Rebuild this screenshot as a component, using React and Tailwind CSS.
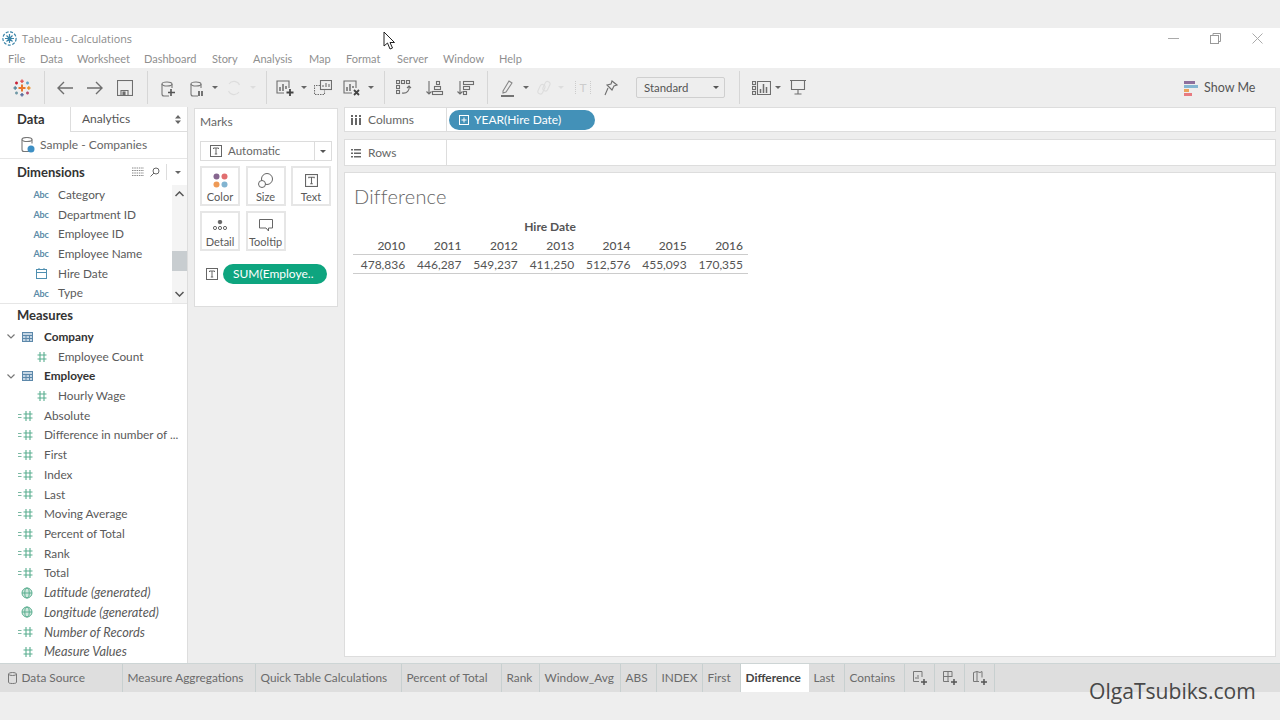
import React from "react";

const Sep = () => <div className="w-px h-[33px] bg-[#d6d6d6] shrink-0" />;
const Caret = ({ c = "#666" }) => (
  <svg width="6" height="3" viewBox="0 0 6 3"><path d="M0 0h6L3 3z" fill={c} /></svg>
);
const Slot = ({ w, children }) => (
  <div className="flex items-center justify-center shrink-0 h-full" style={{ width: w }}>{children}</div>
);
const S = ({ children, w = 20, h = 20 }) => (
  <svg width={w} height={h} viewBox={`0 0 ${w} ${h}`} fill="none" stroke="#6e6e6e" strokeWidth="1.100">{children}</svg>
);
const Logo = () => (
  <svg width="18" height="18" viewBox="0 0 18 18" strokeWidth="1.500" fill="none">
    <path d="M9 5.500v7M5.500 9h7" stroke="#e8762c" strokeWidth="2" />
    <path d="M9 0.500v3.500M7.300 2.200h3.400" stroke="#e15759" />
    <path d="M9 14v3.500M7.300 15.800h3.400" stroke="#5b6e9f" />
    <path d="M0.500 9h3.500M2.200 7.300v3.400" stroke="#59879b" />
    <path d="M14 9h3.500M15.800 7.300v3.400" stroke="#eb9129" />
    <path d="M3.500 2.500v3M2 4h3" stroke="#c72035" />
    <path d="M14.500 2.500v3M13 4h3" stroke="#5fa2c7" />
    <path d="M3.500 12.500v3M2 14h3" stroke="#7099a6" />
    <path d="M14.500 12.500v3M13 14h3" stroke="#b84d6d" />
  </svg>
);
const Cylinder = ({ x = 3, y = 3, stroke = "#777" }) => (
  <g stroke={stroke} fill="none" strokeWidth="1.100">
    <ellipse cx={x + 5} cy={y + 2} rx="5" ry="2" />
    <path d={`M${x} ${y + 2}v10a2 2 0 0 0 2 2h5M${x + 10} ${y + 2}v4`} />
  </g>
);
const Hash = ({ calc }) => (
  <svg width="18" height="12" viewBox="0 0 18 12" fill="none" stroke="#5aae90" strokeWidth="1.100">
    {calc && <path d="M0 4.500h3.500M0 7.500h3.500" stroke="#7ab8a2" />}
    <path d="M8 1v10M12 1v10M5.500 4h9M5.500 8h9" />
  </svg>
);
const Globe = () => (
  <svg width="12" height="12" viewBox="0 0 12 12" fill="#cfe8dd" stroke="#5aae90" strokeWidth="1">
    <circle cx="6" cy="6" r="5" />
    <ellipse cx="6" cy="6" rx="2.200" ry="5" fill="none" />
    <path d="M1 6h10" />
  </svg>
);
const Cal = () => (
  <svg width="11" height="11" viewBox="0 0 11 11" fill="none" stroke="#4f8fb0" strokeWidth="1">
    <rect x="0.500" y="1.500" width="10" height="9" />
    <path d="M0.500 4.500h10M3 0v2M8 0v2" />
  </svg>
);
const Abc = () => <span className="text-[9px] font-bold text-[#5c8ba8] tracking-tight leading-none">Abc</span>;
const TableIco = () => (
  <svg width="11" height="10" viewBox="0 0 11 10" fill="#c5d6e4" stroke="#5c88aa" strokeWidth="1">
    <rect x="0.500" y="0.500" width="10" height="9" />
    <path d="M0.500 3.500h10M4 3.500v6M7.500 3.500v6M0.500 6.500h10" />
  </svg>
);
const Chev = () => (
  <svg width="8" height="5" viewBox="0 0 8 5" fill="none" stroke="#777" strokeWidth="1.200"><path d="M0.500 0.500L4 4l3.500-3.500" /></svg>
);
const TBox = ({ size = 12 }) => (
  <svg width={size} height={size} viewBox="0 0 12 12" fill="none" stroke="#666" strokeWidth="1">
    <rect x="0.500" y="0.500" width="11" height="11" />
    <path d="M3.500 4V3h5v1M6 3v6M4.800 9h2.400" />
  </svg>
);

const Row = ({ pad, icon, label, italic }) => (
  <div className="flex items-center h-[19.7px] shrink-0 whitespace-nowrap text-[#5a5a5a]">
    <div className="flex justify-center items-center shrink-0 w-[18px]" style={{ marginLeft: pad }}>{icon}</div>
    <span className={italic ? "ml-[8px] italic text-[12.8px]" : "ml-[8px] text-[11.8px]"}>{label}</span>
  </div>
);
const dims = [
  ["Category", <Abc />], ["Department ID", <Abc />], ["Employee ID", <Abc />],
  ["Employee Name", <Abc />], ["Hire Date", <Cal />], ["Type", <Abc />],
];
const calc = ["Absolute", "Difference in number of ...", "First", "Index", "Last", "Moving Average", "Percent of Total", "Rank", "Total"];
const menu = [["File", 32], ["Data", 37], ["Worksheet", 67], ["Dashboard", 68], ["Story", 41], ["Analysis", 56], ["Map", 37], ["Format", 51], ["Server", 46], ["Window", 56], ["Help", 40]];
const MenuBar = () => (
  <div className="h-[19px] bg-white flex items-center pl-2 pt-[2px] text-[11px] text-[#8f8f8f] shrink-0">
    {menu.map(([m, w]) => <span key={m} className="shrink-0" style={{ width: w }}>{m}</span>)}
  </div>
);
const Card = ({ icon, label }) => (
  <div className="w-[40px] h-[40px] border-2 border-[#e6e6e6] flex flex-col items-center justify-between pt-[3px] text-[11px] text-[#5a5a5a] shrink-0">
    <div className="h-[18px] flex items-center justify-center">{icon}</div>
    <span className="leading-[14px] whitespace-nowrap">{label}</span>
  </div>
);
const Shelf = ({ icon, label, children, h }) => (
  <div className={`flex bg-white border border-[#dddddd] shrink-0 ${h}`}>
    <div className="w-[102px] border-r border-[#dddddd] flex items-center pl-[6px] gap-[7px] text-[12px] text-[#666]">
      {icon}<span className="pt-[1px]">{label}</span>
    </div>
    <div className="flex-1 flex items-center pl-[2px]">{children}</div>
  </div>
);
const years = [["2010", "478,836"], ["2011", "446,287"], ["2012", "549,237"], ["2013", "411,250"], ["2014", "512,576"], ["2015", "455,093"], ["2016", "170,355"]];
const Tab = ({ w, children, active, center }) => (
  <div className={`h-full shrink-0 flex items-center text-[11.85px] whitespace-nowrap ${center ? "justify-center" : "pl-[4.5px]"} ${active ? "bg-white font-bold text-[#444]" : "border-r border-[#c8d0d0] text-[#6b6b6b]"}`} style={{ width: w }}>
    {children}
  </div>
);
const NewTab = ({ children }) => (
  <Tab w={30} center>
    <svg width="16" height="16" viewBox="0 0 16 16" fill="none" stroke="#777" strokeWidth="1">
      {children}
      <path d="M12 9v6M9 12h6" stroke="#555" strokeWidth="1.500" />
    </svg>
  </Tab>
);

export default function App() {
  return (
    <div className="relative w-[1280px] h-[720px] overflow-hidden flex flex-col bg-[#eeeeee] font-['Lato',sans-serif]">
      <div className="h-[28px] shrink-0" />
      <div className="h-[21px] bg-white flex items-center shrink-0 pl-[2px] gap-[5px] pr-[17px]">
        <svg width="15" height="15" viewBox="0 0 15 15" fill="none" stroke="#3a84a8" strokeWidth="1.200">
          <circle cx="7.500" cy="7.500" r="6.600" strokeDasharray="3 1.500" />
          <path d="M7.500 3v9M3 7.500h9M4.500 4.500l6 6M10.500 4.500l-6 6" />
        </svg>
        <span className="pt-[1px] text-[10.8px] text-[#8a8a8a] font-['Open_Sans',sans-serif] flex-1">Tableau - Calculations</span>
        <div className="flex items-center gap-[31px]">
          <svg width="11" height="11" viewBox="0 0 11 11" stroke="#aaa"><path d="M0 5.500h11" /></svg>
          <svg width="11" height="11" viewBox="0 0 11 11" fill="none" stroke="#999"><rect x="0.500" y="2.500" width="8" height="8" /><path d="M3 2.500v-2h7.500v8h-2" /></svg>
          <svg width="11" height="11" viewBox="0 0 11 11" stroke="#aaa"><path d="M0.500 0.500l10 10M10.500 0.500l-10 10" /></svg>
        </div>
      </div>
      <MenuBar />

      <div className="h-[39px] flex items-center shrink-0 text-[#555]">
        <Slot w={44}><Logo /></Slot>
        <Sep />
        <Slot w={5} />
        <Slot w={30}><S w={18} h={14}><path d="M17 7H2M8 1L2 7l6 6" strokeWidth="1.400" /></S></Slot>
        <Slot w={30}><S w={18} h={14}><path d="M1 7h15M10 1l6 6-6 6" strokeWidth="1.400" /></S></Slot>
        <Slot w={30}><S w={16} h={16}><rect x="0.500" y="0.500" width="15" height="15" /><path d="M4 15.500v-5h7v5" /><rect x="6" y="12" width="2" height="3" fill="#666" /></S></Slot>
        <Slot w={7} />
        <Sep />
        <Slot w={5} />
        <Slot w={30}><S w={18} h={18}><Cylinder /><path d="M12 10v7M9 13.500h7" strokeWidth="1.600" stroke="#555" /></S></Slot>
        <Slot w={28}><S w={18} h={18}><Cylinder /><path d="M11 12v5M14 12v5" strokeWidth="1.600" stroke="#555" /></S></Slot>
        <Slot w={8}><Caret /></Slot>
        <Slot w={30}><S w={16} h={16}><g stroke="#ddd"><path d="M13.500 5A6 6 0 0 0 3 4M2.500 11A6 6 0 0 0 13 12" /></g></S></Slot>
        <Slot w={8}><Caret c="#ddd" /></Slot>
        <Slot w={9} />
        <Sep />
        <Slot w={3} />
        <Slot w={30}><S w={20} h={18}><path d="M14 9V2H2v12h7" /><path d="M5 12V8M8 12V5M11 10V7" strokeWidth="1.500" /><path d="M15 10v7M11.500 13.500h7" stroke="#444" strokeWidth="1.800" /></S></Slot>
        <Slot w={8}><Caret /></Slot>
        <Slot w={30}><S w={18} h={16}><rect x="6.500" y="0.500" width="11" height="9" /><path d="M9 7V5M12 7V3M15 7V4" /><path d="M6 5.500H0.500v9h10v-4" strokeDasharray="1.500 1" /></S></Slot>
        <Slot w={28}><S w={20} h={18}><path d="M14 9V2H2v12h8" /><path d="M5 12V8M8 12V5M11 9V7" strokeWidth="1.500" /><path d="M12 11l5 5M17 11l-5 5" stroke="#444" strokeWidth="1.800" /></S></Slot>
        <Slot w={10}><Caret /></Slot>
        <Slot w={8} />
        <Sep />
        <Slot w={4} />
        <Slot w={30}><S w={16} h={16}><rect x="0.500" y="0.500" width="3" height="3" /><rect x="5.500" y="0.500" width="3" height="3" /><rect x="10.500" y="0.500" width="3" height="3" /><rect x="0.500" y="5.500" width="3" height="3" /><rect x="0.500" y="10.500" width="3" height="3" /><path d="M6 13c5 1 8-3 7-7M11 8l2-2 2 2" /></S></Slot>
        <Slot w={32}><S w={18} h={16}><path d="M3 1v13M0.500 11.500L3 14l2.500-2.500" /><rect x="10.500" y="1.500" width="3" height="3" /><rect x="8.500" y="6.500" width="6" height="3" /><rect x="6.500" y="11.500" width="10" height="3" /></S></Slot>
        <Slot w={29}><S w={18} h={16}><path d="M3 1v13M0.500 11.500L3 14l2.500-2.500" /><rect x="6.500" y="1.500" width="10" height="3" /><rect x="6.500" y="6.500" width="6" height="3" /><rect x="6.500" y="11.500" width="3" height="3" /></S></Slot>
        <Slot w={7} />
        <Sep />
        <Slot w={6} />
        <Slot w={28}><S w={14} h={18}><path d="M2 12L8 2l3 2-6 9-3 1z" stroke="#888" /><path d="M0 17h13" strokeWidth="1.600" stroke="#555" /></S></Slot>
        <Slot w={8}><Caret /></Slot>
        <Slot w={27}><S w={14} h={16}><g stroke="#ddd"><rect x="2" y="4" width="5" height="10" rx="2.500" transform="rotate(25 4 9)" /><rect x="7" y="1" width="5" height="10" rx="2.500" transform="rotate(25 9 6)" /></g></S></Slot>
        <Slot w={8}><Caret c="#ddd" /></Slot>
        <Slot w={36}><span className="text-[12px] text-[#ccc] border-x border-dotted border-[#ccc] px-[3px] leading-[13px]">T</span></Slot>
        <Slot w={20}><S w={14} h={16}><path d="M8 1l5 4-3 1-2 4-5-5 4-1zM4 8l-3 7" /></S></Slot>
        <Slot w={15} />
        <div className="w-[89px] h-[21px] border border-[#cfcfcf] rounded-[2px] flex items-center justify-between pl-[7px] pr-[5px] text-[11.4px] text-[#555] shrink-0">
          <span>Standard</span><Caret c="#555" />
        </div>
        <Slot w={14} />
        <Sep />
        <Slot w={11} />
        <Slot w={20}><S w={19} h={14}><rect x="0.500" y="0.500" width="3" height="3" /><rect x="0.500" y="5.500" width="3" height="3" /><rect x="0.500" y="10.500" width="3" height="3" /><path d="M5.500 0.500h13v13h-13z" /><path d="M8.500 12V8M11.500 12V3M14.500 12V6" strokeWidth="1.500" /></S></Slot>
        <Slot w={3} />
        <Slot w={8}><Caret /></Slot>
        <Slot w={8} />
        <Slot w={16}><S w={16} h={15}><path d="M0 0.500h16M1.500 0.500v9h13v-9M8 9.500v4M4.500 14h7" /></S></Slot>
        <div className="ml-[378px] flex items-center gap-[5px] mt-[1px]">
          <svg width="15" height="15" viewBox="0 0 15 15">
            <rect y="0" width="11" height="3" fill="#8e6f9c" />
            <rect y="4" width="14" height="3" fill="#84b6d2" />
            <rect y="8" width="5" height="3" fill="#eba25a" />
            <rect y="12" width="8" height="3" fill="#e87a80" />
          </svg>
          <span className="text-[12.5px] text-[#555]">Show Me</span>
        </div>
      </div>

      <div className="flex-1 flex min-h-0">
        <div className="w-[188px] shrink-0 bg-white border-r border-[#dddddd] flex flex-col overflow-hidden">
          <div className="h-[25px] flex shrink-0">
            <div className="w-[70px] flex items-center pl-[17px] text-[13px] font-bold text-[#333]">Data</div>
            <div className="flex-1 bg-white border-l border-b border-[#dddddd] flex items-center justify-between pl-[11px] pr-[6px] text-[12px] text-[#555]">
              <span>Analytics</span>
              <svg width="6" height="9" viewBox="0 0 6 9" fill="#666"><path d="M3 0l3 3.500H0zM3 9L0 5.500h6z" /></svg>
            </div>
          </div>
          <div className="h-[27px] shrink-0 border-b border-[#e6e6e6] flex items-center pl-[21px] gap-[5px] text-[12px] text-[#666]">
            <svg width="14" height="16" viewBox="0 0 14 16"><Cylinder x={1} y={0.5} /><circle cx="10" cy="12" r="3.500" fill="#3d8fc4" /></svg>
            <span>Sample - Companies</span>
          </div>
          <div className="h-[26px] shrink-0 flex items-center pl-[17px] pr-[6px] text-[13px] font-bold text-[#333]">
            <span className="flex-1 pt-[2px]">Dimensions</span>
            <svg width="12" height="10" viewBox="0 0 12 10" stroke="#888" strokeDasharray="1.500 0.800"><path d="M0 1h12M0 3.500h12M0 6h12M0 8.500h12" /></svg>
            <svg className="ml-[6px]" width="10" height="10" viewBox="0 0 10 10" fill="none" stroke="#666"><circle cx="6" cy="4" r="3" /><path d="M4 6L0.500 9.500" /></svg>
            <div className="w-px h-[16px] bg-[#ddd] ml-[6px] mr-[8px]" />
            <Caret />
          </div>
          <div className="h-[119px] shrink-0 border-b border-[#e6e6e6] flex">
            <div className="flex-1 flex flex-col">
              {dims.map(([l, i]) => <Row key={l} pad={32} icon={i} label={l} />)}
            </div>
            <div className="w-[15px] bg-[#f4f4f4] flex flex-col items-center pt-[6px] pb-[6px]">
              <svg className="shrink-0" width="9" height="6" viewBox="0 0 9 6" fill="none" stroke="#555" strokeWidth="1.500"><path d="M0.500 5L4.500 1l4 4" /></svg>
              <div className="w-full h-[20px] bg-[#c8cdd0] mt-[54px] shrink-0" />
              <svg className="mt-auto shrink-0" width="9" height="6" viewBox="0 0 9 6" fill="none" stroke="#555" strokeWidth="1.500"><path d="M0.500 1l4 4 4-4" /></svg>
            </div>
          </div>
          <div className="h-[23px] shrink-0 flex items-center pl-[17px] text-[13px] font-bold text-[#333]">Measures</div>
          <div className="flex flex-col">
            <FolderRow label="Company" />
            <Row pad={32} icon={<Hash />} label="Employee Count" />
            <FolderRow label="Employee" />
            <Row pad={32} icon={<Hash />} label="Hourly Wage" />
            {calc.map((l) => <Row key={l} pad={18} icon={<Hash calc />} label={l} />)}
            <Row pad={18} icon={<Globe />} italic label="Latitude (generated)" />
            <Row pad={18} icon={<Globe />} italic label="Longitude (generated)" />
            <Row pad={18} icon={<Hash calc />} italic label="Number of Records" />
            <Row pad={18} icon={<Hash />} italic label="Measure Values" />
          </div>
        </div>

        <div className="w-[144px] h-[199px] ml-[6px] mt-[1px] shrink-0 bg-white border border-[#dddddd] px-[5px] flex flex-col">
          <div className="h-[25px] flex items-center text-[12px] text-[#666] shrink-0">Marks</div>
          <div className="mt-[7px] h-[20px] border border-[#dcdcdc] flex items-center text-[11.5px] text-[#666] shrink-0">
            <div className="flex-1 flex items-center pl-[9px] gap-[6px]"><TBox />Automatic</div>
            <div className="w-[17px] h-full border-l border-[#dcdcdc] flex items-center justify-center"><Caret c="#555" /></div>
          </div>
          <div className="mt-[5px] flex gap-[5.5px] shrink-0">
            <Card label="Color" icon={
              <svg width="15" height="15" viewBox="0 0 15 15"><circle cx="3.500" cy="3.500" r="3" fill="#86668f" /><circle cx="11.500" cy="3.500" r="3" fill="#e16e70" /><circle cx="3.500" cy="11.500" r="3" fill="#ee9a56" /><circle cx="11.500" cy="11.500" r="3" fill="#82b4d1" /></svg>
            } />
            <Card label="Size" icon={
              <svg width="15" height="15" viewBox="0 0 15 15" fill="none" stroke="#666"><circle cx="9" cy="6" r="5.500" /><circle cx="4" cy="11" r="3.500" fill="#fff" /></svg>
            } />
            <Card label="Text" icon={<TBox size={13} />} />
          </div>
          <div className="mt-[5px] flex gap-[5.5px] shrink-0">
            <Card label="Detail" icon={
              <svg width="14" height="10" viewBox="0 0 14 10" fill="none" stroke="#666"><circle cx="7" cy="2" r="1.800" fill="#666" /><circle cx="2" cy="8" r="1.600" /><circle cx="7" cy="8" r="1.600" /><circle cx="12" cy="8" r="1.600" /></svg>
            } />
            <Card label="Tooltip" icon={
              <svg width="14" height="13" viewBox="0 0 14 13" fill="none" stroke="#666"><path d="M0.500 0.500h13v8.500H9.500v3L7 9H0.500z" /></svg>
            } />
          </div>
          <div className="mt-[13px] flex items-center shrink-0">
            <div className="w-[23px] flex justify-center"><TBox /></div>
            <div className="w-[104px] h-[20px] rounded-full bg-[#0ea57f] text-white text-[12px] flex items-center pl-[10px] whitespace-nowrap">SUM(Employe..</div>
          </div>
        </div>

        <div className="ml-[6px] w-[932px] shrink-0 flex flex-col pb-[6px]">
          <Shelf h="h-[25px]" label="Columns" icon={
            <svg width="10" height="10" viewBox="0 0 10 10" fill="#666"><rect width="2" height="2" /><rect x="4" width="2" height="2" /><rect x="8" width="2" height="2" /><rect y="3" width="2" height="7" /><rect x="4" y="3" width="2" height="7" /><rect x="8" y="3" width="2" height="7" /></svg>
          }>
            <div className="w-[146px] h-[20px] rounded-full bg-[#4391b8] text-white text-[12px] flex items-center pl-[10px] gap-[5px]">
              <svg width="10" height="10" viewBox="0 0 10 10" fill="none" stroke="#fff"><rect x="0.500" y="0.500" width="9" height="9" /><path d="M5 2.500v5M2.500 5h5" /></svg>
              YEAR(Hire Date)
            </div>
          </Shelf>
          <Shelf h="h-[27px] mt-[7px]" label="Rows" icon={
            <svg width="10" height="10" viewBox="0 0 10 10" fill="#666"><path d="M0 1h2v1.500H0zM3 1h7v1.500H3zM0 4.500h2V6H0zM3 4.500h7V6H3zM0 8h2v1.500H0zM3 8h7v1.500H3z" /></svg>
          } />
          <div className="mt-[6px] flex-1 bg-white border border-[#dddddd] pl-[8px] pt-[10px]">
            <div className="ml-[1px] text-[20px] leading-[26px] text-[#666] font-light tracking-[0.2px]">Difference</div>
            <div className="w-[395px] mt-[8px] text-[12px] text-[#555]">
              <div className="text-center font-bold h-[19px] leading-[19px] pr-[1px]">Hire Date</div>
              <div className="grid grid-cols-[repeat(7,56.3px)] justify-end h-[19px] leading-[19px] border-b border-[#cccccc] text-right pr-[5px] font-medium">
                {years.map(([y]) => <div key={y}>{y}</div>)}
              </div>
              <div className="grid grid-cols-[repeat(7,56.3px)] justify-end h-[19px] leading-[19px] border-b border-[#cccccc] text-right pr-[5px]">
                {years.map(([y, v]) => <div key={y}>{v}</div>)}
              </div>
            </div>
          </div>
        </div>
      </div>

      <div className="h-[29px] shrink-0 bg-[#dedede] border-t border-[#cdd5d5] flex">
        <Tab w={123}>
          <span className="flex items-center gap-[5px] pl-[3px]">
            <svg width="9" height="12" viewBox="0 0 9 12" fill="none" stroke="#777"><ellipse cx="4.500" cy="2" rx="4" ry="1.500" /><path d="M0.500 2v8c0 1 1 1.500 4 1.500s4-.5 4-1.500V2" /></svg>
            Data Source
          </span>
        </Tab>
        <Tab w={133}>Measure Aggregations</Tab>
        <Tab w={146}>Quick Table Calculations</Tab>
        <Tab w={100}>Percent of Total</Tab>
        <Tab w={38}>Rank</Tab>
        <Tab w={81}>Window_Avg</Tab>
        <Tab w={36}>ABS</Tab>
        <Tab w={46}>INDEX</Tab>
        <Tab w={38}>First</Tab>
        <Tab w={68} active>Difference</Tab>
        <Tab w={36}>Last</Tab>
        <Tab w={60}>Contains</Tab>
        <NewTab><path d="M10 7V1.500H1.500v10H7M4 9V7M6 9V5" /></NewTab>
        <NewTab><path d="M10 7V1.500H1.500v10H7M1.500 6.500H10M6 1.500v10" /></NewTab>
        <NewTab><path d="M1.500 2.500L5 1.500l3 1 2-1v6M1.500 2.500v9H7M5 1.500V11" /></NewTab>
      </div>
      <div className="h-[28px] shrink-0" />

      <div className="absolute left-[1089px] top-[676px] text-[21.1px] leading-[30px] text-[#484848] font-['Open_Sans',sans-serif]">OlgaTsubiks.com</div>
      <svg className="absolute left-[383px] top-[31px]" width="14" height="20" viewBox="0 0 14 20" fill="#fff" stroke="#222"><path d="M1 1v14l3.500-3 2.500 6 2.500-1-2.500-5.500h4.500z" /></svg>
    </div>
  );
}

function FolderRow({ label }) {
  return (
    <div className="flex items-center h-[19.7px] shrink-0 text-[11.8px] font-bold text-[#333]">
      <div className="w-[22px] flex justify-center"><Chev /></div>
      <div className="w-[11px] flex justify-center"><TableIco /></div>
      <span className="ml-[11px]">{label}</span>
    </div>
  );
}
